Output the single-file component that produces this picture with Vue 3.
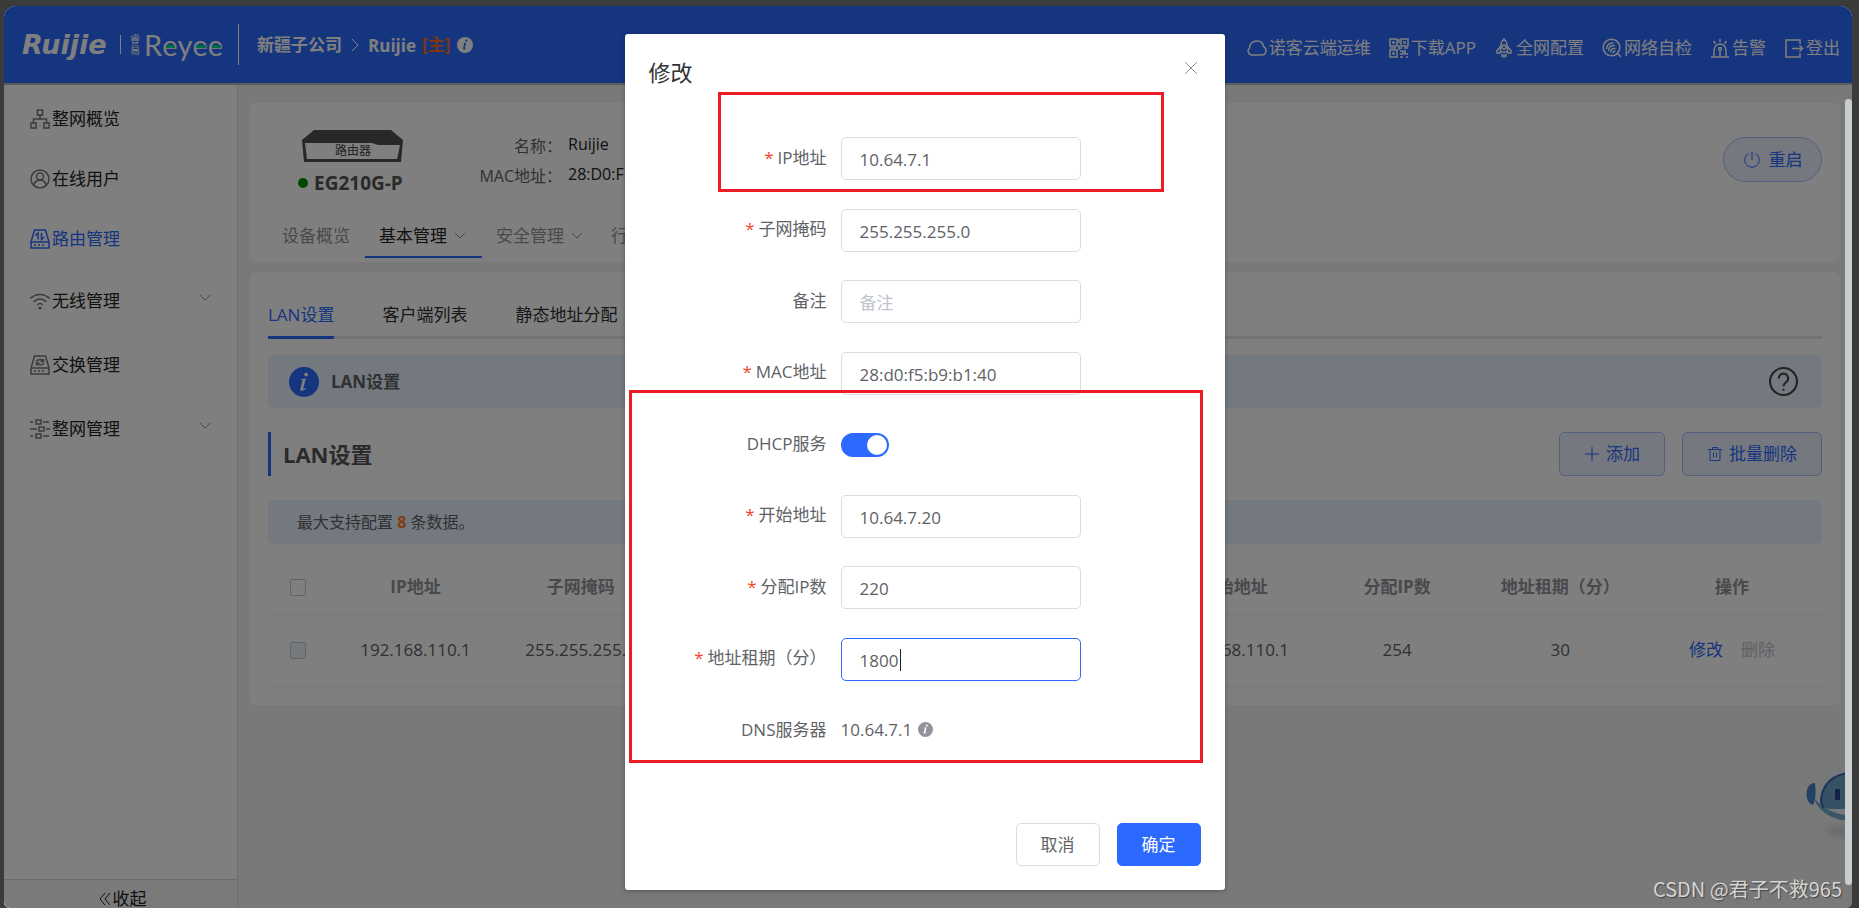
<template>
  <div class="frame">
    <header class="topbar">
      <div class="logo">
        <span class="logo-ruijie">Ruijie</span>
        <span class="logo-line" />
        <span class="logo-cn"><span>睿</span><span>易</span></span>
        <span class="logo-reyee">R<i>e</i>y<i>e</i><i>e</i></span>
      </div>
      <nav class="crumb">
        <strong>新疆子公司</strong>
        <svg class="crumb-arrow" viewBox="0 0 8 14"><path d="M1 1l6 6-6 6" /></svg>
        <strong class="crumb-name">Ruijie</strong>
        <strong class="crumb-main">[主]</strong>
        <svg class="crumb-info" viewBox="0 0 16 16">
          <circle cx="8" cy="8" r="8" />
          <path d="M9.4 2.6a1.1 1.1 0 1 1-.1 2.2 1.1 1.1 0 0 1 .1-2.2zM6.2 6.2l3-.4-1.4 5.4c-.1.6.3.5 1-.2l.3.3c-1 1.3-3.4 2-3 0l1-4.2c.1-.5-.1-.6-.9-.6z" />
        </svg>
      </nav>
      <nav class="tools">
        <a v-for="t in tools" :key="t.label" href="#">
          <svg class="icon" viewBox="0 0 20 20" v-html="icons[t.icon]" />{{ t.label }}
        </a>
      </nav>
    </header>

    <div class="body">
      <aside class="sidebar">
        <ul class="menu">
          <li v-for="m in menu" :key="m.label" :class="{ active: m.active, tall: m.tall }">
            <a href="#">
              <svg class="icon" viewBox="0 0 20 20" v-html="icons[m.icon]" />
              <span>{{ m.label }}</span>
              <svg v-if="m.sub" class="chevron" viewBox="0 0 12 7"><path d="M1 1l5 5 5-5" /></svg>
            </a>
          </li>
        </ul>
        <button class="collapse" type="button">
          <svg viewBox="0 0 12 14"><path d="M6 1L1 7l5 6M11 1L6 7l5 6" /></svg>收起
        </button>
      </aside>

      <main class="content">
        <section class="panel device">
          <div class="device-head">
            <div class="device-id">
              <svg class="router" viewBox="0 0 101 32">
                <path d="M12 0h77l12 10H0z" fill="#505050" />
                <path d="M0 10h101l-2 22H2z" fill="#505050" />
                <path d="M3 13h67l6 2h22l-2 10-1 4H5z" fill="#fff" />
                <text x="51" y="25" text-anchor="middle">路由器</text>
              </svg>
              <div class="model"><span class="dot" />EG210G-P</div>
            </div>
            <dl class="device-info">
              <dt>名称：</dt><dd>Ruijie</dd>
              <dt>MAC地址：</dt><dd>28:D0:F5:B9:B1:40</dd>
            </dl>
            <button class="reboot" type="button">
              <svg viewBox="0 0 18 18"><path d="M9 1v8M5.500 2.500a7.300 7.300 0 1 0 7 0" /></svg>重启
            </button>
          </div>
          <nav class="device-tabs">
            <a v-for="t in deviceTabs" :key="t.label" href="#" :class="{ active: t.active }">
              {{ t.label }}<svg v-if="t.sub" class="chevron" viewBox="0 0 12 7"><path d="M1 1l5 5 5-5" /></svg>
            </a>
          </nav>
        </section>

        <section class="panel lan">
          <nav class="tabs">
            <a v-for="(t, i) in tabs" :key="t" href="#" :class="{ active: i === 0 }">{{ t }}</a>
          </nav>
          <div class="tip">
            <svg class="tip-icon" viewBox="0 0 16 16">
              <circle cx="8" cy="8" r="8" />
              <path d="M9.200 3a1 1 0 1 1-.1 2 1 1 0 0 1 .1-2zM6.200 6.500l2.800-.4-1.400 5.200c-.1.6.3.5 1-.2l.3.3c-1 1.300-3.200 1.900-2.800 0l1-4c.1-.5-.1-.6-.9-.6z" />
            </svg>
            <strong>LAN设置</strong>
            <svg class="help" viewBox="0 0 28 28">
              <circle cx="14" cy="14" r="13" />
              <path d="M9.500 11a4.500 4.500 0 1 1 7.500 3.300c-1.800 1.500-3 2-3 4.200M14 21v2" />
            </svg>
          </div>
          <div class="title-row">
            <h2>LAN设置</h2>
            <button class="plain" type="button">
              <svg viewBox="0 0 16 16"><path d="M8 1v14M1 8h14" /></svg>添加
            </button>
            <button class="plain" type="button">
              <svg viewBox="0 0 16 16"><path d="M1 3.500h14M5.500 3.500v-2h5v2M3 3.500v11h10v-11M6.500 6.500v5M9.500 6.500v5" /></svg>批量删除
            </button>
          </div>
          <p class="limit">最大支持配置 <b>8</b> 条数据。</p>
          <table>
            <colgroup>
              <col class="col-check" /><col class="col-ip" /><col /><col /><col /><col /><col /><col /><col /><col class="col-op" />
            </colgroup>
            <thead>
              <tr>
                <th><input type="checkbox" aria-label="全选" /></th>
                <th v-for="(c, i) in columns" :key="i">{{ c }}</th>
              </tr>
            </thead>
            <tbody>
              <tr>
                <td><input type="checkbox" disabled aria-label="192.168.110.1" /></td>
                <td v-for="(c, i) in row" :key="i">{{ c }}</td>
                <td class="ops"><a href="#">修改</a><a class="off" href="#">删除</a></td>
              </tr>
            </tbody>
          </table>
        </section>
      </main>
    </div>

    <svg class="robot" viewBox="0 0 46 80">
      <defs>
        <filter id="soft" x="-50%" y="-50%" width="200%" height="200%"><feGaussianBlur stdDeviation="3" /></filter>
      </defs>
      <ellipse cx="40" cy="69" rx="20" ry="6" fill="#d4d4de" filter="url(#soft)" />
      <path d="M46 2C24 2 9 14 8 31c1 14 18 27 38 27z" fill="#eef1f5" />
      <path d="M9 21C-2 21-2 41 7 43c3-6 3-14 2-22z" fill="#4784c4" />
      <path d="M8 36c4 14 20 23 38 23v-5C30 53 16 46 8 36z" fill="#77acc9" />
      <path d="M46 11C26 11 16 24 15 38c0 6 4 9 10 9h21z" fill="#6fa3c9" />
      <path d="M46 11C26 11 16 24 15 38c0 4 1 6 3 8" fill="none" stroke="#3567ac" stroke-width="2" />
      <rect x="29" y="27" width="5" height="11" rx="1" fill="#28408e" />
    </svg>

    <div class="mask">
      <form class="dialog" role="dialog" aria-labelledby="dlg-title" @submit.prevent>
        <header>
          <h3 id="dlg-title">修改</h3>
          <button class="close" type="button" aria-label="关闭">
            <svg viewBox="0 0 12 12"><path d="M0 0l12 12M12 0L0 12" /></svg>
          </button>
        </header>
        <div class="rows">
          <div v-for="f in fields" :key="f.id" class="row">
            <label :for="f.id"><em v-if="f.required">*</em>{{ f.label }}</label>
            <input v-if="f.type === 'switch'" :id="f.id" v-model="f.value" class="switch" type="checkbox" />
            <output v-else-if="f.type === 'text'" :id="f.id">
              {{ f.value }}
              <svg viewBox="0 0 16 16">
                <circle cx="8" cy="8" r="8" />
                <path d="M9.400 2.600a1.100 1.100 0 1 1-.1 2.200 1.100 1.100 0 0 1 .1-2.200zM6.200 6.200l3-.4-1.400 5.400c-.1.6.3.5 1-.2l.3.3c-1 1.300-3.400 2-3 0l1-4.200c.1-.5-.1-.6-.9-.6z" />
              </svg>
            </output>
            <div v-else class="field" :class="{ focused: f.focused }">
              <input :id="f.id" v-model="f.value" type="text" :placeholder="f.placeholder" />
            </div>
          </div>
        </div>
        <footer>
          <button type="button">取消</button>
          <button class="primary" type="submit">确定</button>
        </footer>
        <span class="mark mark-ip" />
        <span class="mark mark-dhcp" />
      </form>
    </div>

    <span class="scrollbar" />
    <span class="watermark">CSDN @君子不救965</span>
  </div>
</template>

<script setup>
import { ref } from "vue";

const icons = {
  cloud: '<path d="M5 17a4 4 0 0 1-2.500-7C3 5.500 6 3 10 3c3.500 0 6 2 6.500 5.500C20 10 20 17 14.500 17z"/>',
  qr: '<path d="M1 1h7v7H1zM12 1h7v7h-7zM1 12h7v7H1zM4 4h1v1H4zM15 4h1v1h-1zM4 15h1v1H4zM10 1v4M10 7v3h3M1 10h6M15 10h4M11 13h3v3h-3M16 12v4h3M11 19h3M17 19h2M10 10v2"/>',
  rocket: '<path d="M10 1C6.500 4 6 8 6.500 14h7C14 8 13.500 4 10 1zM6.300 9L3 12.500V15h3.500M13.700 9l3.300 3.500V15h-3.500M8 16v3M12 16v3M10 16v4"/><circle cx="10" cy="9" r="2"/>',
  scan: '<circle cx="9.500" cy="9.500" r="8.300"/><path d="M15.500 15.500L19 19M4.500 11c0-4 3-6.500 7-6M6.500 13c0-4 2.500-6 6.500-5.500M8.500 14.500c0-3 2-4.500 5-4M11 15c0-1.500 1-2 2.500-2"/>',
  alarm: '<path d="M1 19h18M4 19v-7a6 6 0 0 1 12 0v7M10 1v3M3.500 3l2 2.500M16.500 3l-2 2.500M10 13v6"/><circle cx="10" cy="11" r="1.500"/>',
  logout: '<path d="M16 6V2H2v17h14v-4M8 10.500h10.500M15.500 7.500l3 3-3 3"/>',
  topo: '<path d="M7.500 1h5v5h-5zM1 14h5v5H1zM14 14h5v5h-5zM10 6v4M3.500 14v-4h13v4"/>',
  user: '<circle cx="10" cy="10" r="9"/><circle cx="10" cy="7.500" r="3.500"/><path d="M4 16.500c.5-3.500 3-5.500 6-5.500s5.500 2 6 5.500"/>',
  router: '<path d="M4.500 1h11L19 13v6H1v-6zM1 13h18M4 16h2M8 16h2M12 16h2M8 10.500V4L5.500 6.500M11.500 4v6.500L14 8"/>',
  wifi: '<path d="M0 7.500C6 2 14 2 20 7.500M3.500 11C7.500 7 12.500 7 16.500 11M7 14c2-2 4-2 6 0"/><circle cx="10" cy="17" r=".8"/>',
  swap: '<path d="M4.500 1h11L19 13v6H1v-6zM1 13h18M4 16h2M8 16h2M12 16h2M6 6.500c1-2 5-2.500 7-1M10.500 6.500h3V4M14 8c-1 2-5 2.500-7 1M9.500 8h-3v2.500"/>',
  sliders: '<path d="M0 3h3M6 1h5v4H6zM13 3h6M0 10h7M9 8h5v4H9zM16 10h4M0 17h3M6 15h5v4H6zM13 17h6"/>',
};

const tools = [
  { icon: "cloud", label: "诺客云端运维" },
  { icon: "qr", label: "下载APP" },
  { icon: "rocket", label: "全网配置" },
  { icon: "scan", label: "网络自检" },
  { icon: "alarm", label: "告警" },
  { icon: "logout", label: "登出" },
];

const menu = [
  { icon: "topo", label: "整网概览" },
  { icon: "user", label: "在线用户" },
  { icon: "router", label: "路由管理", active: true },
  { icon: "wifi", label: "无线管理", sub: true, tall: true },
  { icon: "swap", label: "交换管理", tall: true },
  { icon: "sliders", label: "整网管理", sub: true, tall: true },
];

const deviceTabs = [
  { label: "设备概览" },
  { label: "基本管理", sub: true, active: true },
  { label: "安全管理", sub: true },
  { label: "行为管理", sub: true },
];

const tabs = ["LAN设置", "客户端列表", "静态地址分配"];

const columns = ["IP地址", "子网掩码", "", "", "", "开始地址", "分配IP数", "地址租期（分）", "操作"];
const row = ["192.168.110.1", "255.255.255.0", "", "", "", "192.168.110.1", "254", "30"];

const fields = ref([
  { id: "ip", label: "IP地址", value: "10.64.7.1", required: true },
  { id: "mask", label: "子网掩码", value: "255.255.255.0", required: true },
  { id: "remark", label: "备注", value: "", placeholder: "备注" },
  { id: "mac", label: "MAC地址", value: "28:d0:f5:b9:b1:40", required: true },
  { id: "dhcp", label: "DHCP服务", value: true, type: "switch" },
  { id: "start", label: "开始地址", value: "10.64.7.20", required: true },
  { id: "count", label: "分配IP数", value: "220", required: true },
  { id: "lease", label: "地址租期（分）", value: "1800", required: true, focused: true },
  { id: "dns", label: "DNS服务器", value: "10.64.7.1", type: "text" },
]);
</script>

<style>
body {
  background: #3b3b3b;
}
</style>

<style scoped>
* {
  box-sizing: border-box;
}

.frame {
  position: relative;
  display: flex;
  flex-direction: column;
  height: calc(100vh - 6px);
  margin: 6px 7px 0 4px;
  border-radius: 12px 12px 6px 6px;
  overflow: hidden;
  background: #f2f2f2;
  color: #606266;
  font-family: "Open Sans", "Noto Sans CJK SC", sans-serif;
  font-size: 17px;
  line-height: 24px;
}

a {
  color: inherit;
  text-decoration: none;
}

button,
input {
  font: inherit;
}

svg {
  flex: none;
  fill: none;
  stroke: currentColor;
}

.icon {
  width: 20px;
  height: 20px;
  stroke-width: 1.5;
}

.chevron {
  width: 12px;
  height: 7px;
  color: #909399;
}

/* 顶栏 */
.topbar {
  flex: none;
  display: flex;
  align-items: center;
  height: 79px;
  padding: 0 12px 0 18px;
  background: #2c6aff;
  border-bottom: 2px solid #b8b8b8;
  color: #fff;
  white-space: nowrap;
}

.logo {
  display: flex;
  align-items: center;
  height: 41px;
  padding-right: 18px;
  border-right: 1px solid #fff;
}

.logo-ruijie {
  width: 90px;
  font: italic bold 27px/36px "DejaVu Sans", sans-serif;
}

.logo-line {
  width: 1px;
  height: 19px;
  margin: 0 9px 0 8px;
  background: #fff;
}

.logo-cn {
  display: flex;
  flex-direction: column;
  width: 14px;
  font-size: 10px;
  line-height: 11px;
}

.logo-reyee {
  display: flex;
  width: 76px;
  font: 29px/36px "Lato", sans-serif;
}

.logo-reyee i {
  position: relative;
  font-style: normal;
}

.logo-reyee i::after {
  content: "";
  position: absolute;
  left: 4px;
  right: 2px;
  top: 18px;
  height: 3px;
  background: #00d68f;
}

.crumb {
  display: flex;
  align-items: center;
  padding-left: 18px;
}

.crumb-arrow {
  width: 8px;
  height: 14px;
  margin: 0 9px;
}

.crumb-name {
  padding-top: 2px;
}

.crumb-main {
  margin-left: 6px;
  color: #ff6a1a;
}

.crumb-info {
  width: 16px;
  height: 16px;
  margin-left: 7px;
  stroke: none;
}

.crumb-info circle {
  fill: #fff;
}

.crumb-info path {
  fill: #2c6aff;
}

.tools {
  display: flex;
  gap: 18px;
  margin-left: auto;
  padding-top: 6px;
}

.tools a {
  display: flex;
  align-items: center;
  gap: 2px;
}

.body {
  flex: 1;
  display: flex;
  min-height: 0;
}

/* 侧边菜单 */
.sidebar {
  flex: none;
  display: flex;
  flex-direction: column;
  width: 234px;
  background: #fff;
  border-right: 1px solid #dcdcdc;
}

.menu {
  flex: 1;
  margin: 0;
  padding: 4px 0 0;
  list-style: none;
}

.menu a {
  display: flex;
  align-items: center;
  gap: 2px;
  height: 60px;
  padding: 0 26px;
  color: #222;
}

.menu .tall a {
  height: 64px;
}

.menu .icon {
  color: #777;
}

.menu .chevron {
  margin: 0 0 8px auto;
}

.menu .active a,
.menu .active .icon {
  color: #2c6aff;
}

.collapse {
  flex: none;
  display: flex;
  align-items: center;
  justify-content: center;
  gap: 2px;
  height: 29px;
  padding: 9px 0 0 4px;
  border: 0;
  border-top: 1px solid #d4d4d4;
  background: #f5f5f5;
  color: #222;
  line-height: 18px;
}

.collapse svg {
  width: 12px;
  height: 14px;
}

/* 主内容 */
.content {
  flex: 1;
  display: flex;
  flex-direction: column;
  gap: 10px;
  min-width: 0;
  padding: 18px 12px 0;
}

.panel {
  border-radius: 6px;
  background: #fff;
}

.device {
  height: 159px;
  padding-right: 18px;
  overflow: hidden;
}

.device-head {
  display: flex;
  align-items: flex-start;
  height: 112px;
  padding-top: 27px;
}

.device-id {
  width: 206px;
  padding-left: 48px;
}

.router {
  display: block;
  width: 101px;
  height: 32px;
  margin-left: 4px;
  stroke: none;
}

.router text {
  fill: #444;
  font-size: 12px;
}

.model {
  display: flex;
  align-items: center;
  gap: 6px;
  padding-top: 9px;
  color: #555;
  font-size: 19px;
  font-weight: bold;
  white-space: nowrap;
}

.dot {
  width: 10px;
  height: 10px;
  border-radius: 50%;
  background: #009000;
}

.device-info {
  display: grid;
  grid-template-columns: 106px auto;
  gap: 4px 6px;
  margin: 2px 0 0;
  font-size: 16px;
}

.device-info dt {
  padding-top: 2px;
  text-align: right;
  white-space: nowrap;
}

.device-info dd {
  margin: 0;
  color: #222;
}

.reboot {
  display: flex;
  align-items: center;
  justify-content: center;
  gap: 8px;
  width: 99px;
  height: 45px;
  margin: 7px 0 0 auto;
  border: 1px solid #a5bfff;
  border-radius: 23px;
  background: #eaf0ff;
  color: #2c6aff;
}

.reboot svg {
  width: 18px;
  height: 18px;
}

.device-tabs {
  display: flex;
  padding-left: 14px;
  color: #909399;
}

.device-tabs a {
  display: flex;
  align-items: center;
  gap: 7px;
  height: 43px;
  padding: 0 14px;
  border-bottom: 2px solid transparent;
  white-space: nowrap;
}

.device-tabs a:first-child {
  padding: 0 15px 0 18px;
}

.device-tabs .active {
  padding-right: 16px;
  border-color: #2c6aff;
  color: #222;
}

.lan {
  padding: 23px 18px 18px;
}

.tabs {
  display: flex;
  gap: 48px;
  border-bottom: 3px solid #e4e7ed;
  color: #303133;
}

.tabs a {
  height: 44px;
  margin-bottom: -3px;
  padding-top: 8px;
  border-bottom: 3px solid transparent;
}

.tabs .active {
  border-color: #2c6aff;
  color: #2c6aff;
}

.tip {
  display: flex;
  align-items: center;
  height: 53px;
  margin-top: 16px;
  padding: 0 24px 0 21px;
  border-radius: 6px;
  background: #e8f1ff;
}

.tip-icon {
  width: 30px;
  height: 30px;
  margin-right: 12px;
  stroke: none;
}

.tip-icon circle {
  fill: #2c6aff;
}

.tip-icon path {
  fill: #fff;
}

.help {
  width: 29px;
  height: 29px;
  margin-left: auto;
  color: #444;
  stroke-width: 2;
}

.title-row {
  display: flex;
  gap: 17px;
  margin-top: 24px;
}

h2 {
  flex: 1;
  margin: 0;
  padding-left: 12px;
  border-left: 3px solid #2c6aff;
  color: #555;
  font-size: 22px;
  line-height: 44px;
}

.plain {
  display: flex;
  align-items: center;
  gap: 6px;
  height: 44px;
  padding: 0 24px;
  border: 1px solid #a5bfff;
  border-radius: 5px;
  background: #eaf0ff;
  color: #2c6aff;
}

.plain svg {
  width: 16px;
  height: 16px;
}

.limit {
  margin: 24px 0 0;
  padding: 0 29px;
  border-radius: 6px;
  background: #e8f1ff;
  font-size: 16px;
  line-height: 44px;
}

.limit b {
  color: #ff7a1a;
}

table {
  width: 100%;
  margin-top: 17px;
  border-collapse: collapse;
  table-layout: fixed;
}

.col-check {
  width: 64px;
}

.col-ip {
  width: 167px;
}

.col-op {
  width: 180px;
}

th,
td {
  height: 72px;
  padding: 0;
  border-bottom: 1px solid #ebeef5;
  text-align: center;
  white-space: nowrap;
}

th {
  height: 53px;
  color: #909399;
}

th:first-child,
td:first-child {
  padding-left: 22px;
  text-align: left;
}

table input {
  display: block;
  width: 16px;
  height: 17px;
  margin: 0;
  border: 1px solid #c4c7cc;
  border-radius: 2px;
  background: #fff;
  appearance: none;
}

table input:disabled {
  background: #edf2fc;
}

.ops a {
  color: #2c6aff;
}

.ops .off {
  margin-left: 18px;
  color: #c0c4cc;
}

.robot {
  position: absolute;
  right: 0;
  bottom: 66px;
  width: 46px;
  height: 80px;
  stroke: none;
}

/* 遮罩与弹窗 */
.mask {
  position: absolute;
  inset: 0;
  display: flex;
  align-items: flex-start;
  justify-content: center;
  padding: 28px 7px 0 0;
  background: rgba(0, 0, 0, 0.5);
}

.dialog {
  position: relative;
  width: 600px;
  padding: 24px;
  border-radius: 3px;
  background: #fff;
  box-shadow: 0 1px 4px rgba(0, 0, 0, 0.3);
}

.dialog header {
  display: flex;
  justify-content: space-between;
  height: 79px;
}

h3 {
  margin: 0;
  color: #303133;
  font-size: 22px;
  font-weight: normal;
  line-height: 28px;
}

.close {
  width: 20px;
  height: 20px;
  padding: 4px;
  border: 0;
  background: none;
  color: #909399;
}

.close svg {
  display: block;
  width: 12px;
  height: 12px;
  overflow: visible;
}

.rows {
  display: flex;
  flex-direction: column;
  justify-content: space-between;
  min-height: 615px;
}

.row {
  display: flex;
  align-items: center;
  height: 43px;
}

.row label {
  width: 178px;
  margin-right: 14px;
  padding-bottom: 2px;
  text-align: right;
}

.row em {
  margin-right: 4px;
  color: #f0452b;
  font-style: normal;
}

.field {
  width: 240px;
}

.field input {
  display: block;
  width: 100%;
  height: 43px;
  padding: 2px 17px 0 18px;
  border: 1px solid #dcdcdc;
  border-radius: 5px;
  outline: 0;
  color: #606266;
}

.field input::placeholder {
  color: #c0c4cc;
}

.focused {
  position: relative;
}

.focused input {
  border-color: #2c6aff;
}

.focused::after {
  content: "";
  position: absolute;
  left: 59px;
  top: 11px;
  width: 1px;
  height: 22px;
  background: #222;
}

.switch {
  width: 48px;
  height: 24px;
  margin: 0;
  padding: 2px;
  border-radius: 12px;
  background: #dcdfe6;
  appearance: none;
}

.switch::before {
  content: "";
  display: block;
  width: 20px;
  height: 20px;
  border-radius: 50%;
  background: #fff;
}

.switch:checked {
  padding-left: 26px;
  background: #2c6aff;
}

.row output {
  display: flex;
  align-items: center;
  gap: 6px;
  padding-bottom: 2px;
}

.row output svg {
  width: 15px;
  height: 15px;
  stroke: none;
}

.row output circle {
  fill: #909399;
}

.row output path {
  fill: #fff;
}

.dialog footer {
  display: flex;
  justify-content: flex-end;
  gap: 17px;
  padding-top: 71px;
}

.dialog footer button {
  width: 84px;
  height: 43px;
  border: 1px solid #dcdcdc;
  border-radius: 5px;
  background: #fff;
  color: #606266;
}

.dialog footer .primary {
  border-color: #2c6aff;
  background: #2c6aff;
  color: #fff;
}

.mark {
  position: absolute;
  border: 3px solid #ed1c24;
  pointer-events: none;
}

.mark-ip {
  left: 93px;
  top: 58px;
  width: 446px;
  height: 100px;
}

.mark-dhcp {
  left: 4px;
  top: 356px;
  width: 574px;
  height: 373px;
}

.scrollbar {
  position: absolute;
  right: 0;
  top: 93px;
  bottom: 23px;
  width: 7px;
  border-radius: 4px;
  background: #c8cdd0;
}

.watermark {
  position: absolute;
  right: 10px;
  bottom: 7px;
  color: #d4d4d4;
  font-family: "Noto Sans CJK SC", sans-serif;
  font-size: 20px;
  text-shadow: 1px 1px 1px #444;
}
</style>
